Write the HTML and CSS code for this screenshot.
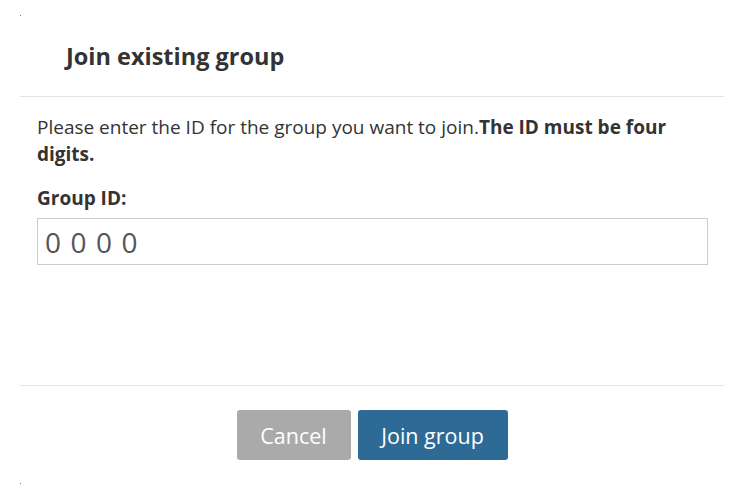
FILE: index.html
```html
<!DOCTYPE html>
<html>
<head>
<meta charset="utf-8">
<link rel="stylesheet" href="styles.css">
</head>
<body>
<span class="dot dot-top"></span>
<span class="dot dot-bottom"></span>
<div class="dialog">
  <div class="header">
    <h1 class="title">Join existing group</h1>
  </div>
  <div class="content">
    <p class="intro">Please enter the ID for the group you want to join.<strong>The ID must be four digits.</strong></p>
    <label class="label" for="gid">Group ID:</label>
    <input class="input" id="gid" type="text" placeholder="0000">
  </div>
  <div class="footer">
    <button class="btn btn-cancel">Cancel</button>
    <button class="btn btn-primary">Join group</button>
  </div>
</div>
</body>
</html>
```
FILE: styles.css
```css
html, body {
  margin: 0;
  padding: 0;
  background: #fff;
}
body {
  font-family: "Open Sans", "Liberation Sans", sans-serif;
  color: #333;
  position: relative;
  width: 748px;
  height: 503px;
  overflow: hidden;
}
.dot {
  position: absolute;
  width: 1px;
  height: 1px;
  background: #777;
  left: 20px;
}
.dot-top { top: 15px; }
.dot-bottom { top: 483px; }
.dialog {
  margin: 0 24px 0 20px;
  padding-top: 40px;
}
.header {
  padding: 0 0 0 46px;
  border-bottom: 1px solid #e5e5e5;
  box-sizing: border-box;
  height: 57px;
}
.title {
  margin: 0;
  font-size: 23.5px;
  font-weight: 700;
  line-height: 32px;
}
.content {
  padding: 17px 16px 0 17px;
  height: 289px;
  box-sizing: border-box;
  border-bottom: 1px solid #e5e5e5;
}
.intro {
  margin: 0 0 17px;
  font-size: 19px;
  line-height: 27px;
}
.intro strong { font-weight: 700; }
.label {
  display: block;
  font-size: 19px;
  font-weight: 700;
  line-height: 27px;
  margin-bottom: 6px;
}
.input {
  display: block;
  width: 100%;
  box-sizing: border-box;
  height: 47px;
  border: 1px solid #ccc;
  border-radius: 0;
  padding: 0 7px;
  font-family: "Open Sans", "Liberation Sans", sans-serif;
  font-size: 28px;
  letter-spacing: 9.5px;
  color: #555;
  outline: none;
}
.input::placeholder { color: #555; opacity: 1; }
.footer {
  display: flex;
  justify-content: center;
  gap: 7px;
  padding-top: 24px;
}
.btn {
  height: 50px;
  border: none;
  border-radius: 3px;
  color: #fff;
  font-family: "Open Sans", "Liberation Sans", sans-serif;
  font-size: 21.5px;
  padding: 0;
}
.btn-cancel { width: 114px; background: #aaa; }
.btn-primary { width: 150px; background: #2e6a96; }
```
